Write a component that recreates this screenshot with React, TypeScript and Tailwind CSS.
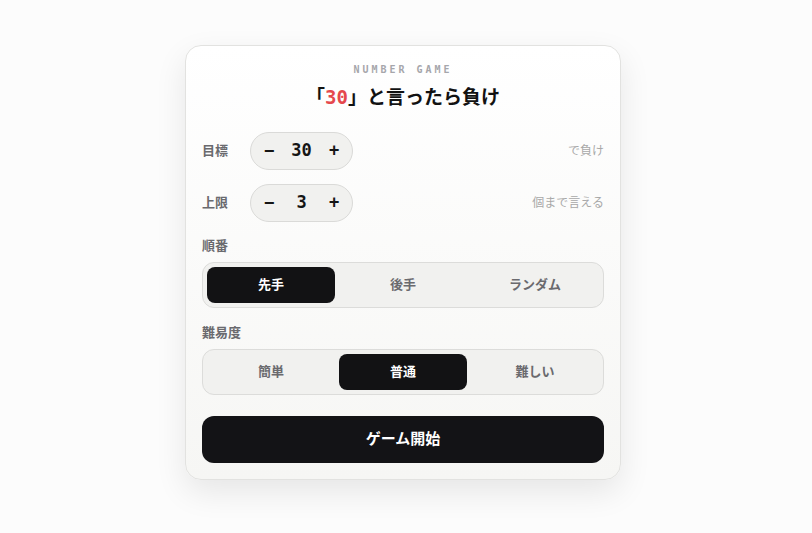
import { useState } from "react";

const FONT = "font-['DejaVu_Sans_Mono','Noto_Sans_CJK_JP',monospace]";

function Stepper({ value, onChange }: { value: number; onChange: (v: number) => void }) {
  return (
    <div className="flex h-[38px] w-[103px] items-center rounded-full border border-[#dadad8] bg-[#f1f1ef] px-[4px]">
      <button
        className="flex h-7 w-7 items-center justify-center text-[17px] font-bold text-[#151515]"
        onClick={() => onChange(value - 1)}
      >
        −
      </button>
      <div className="flex-1 text-center text-[17px] font-bold text-[#151515]">{value}</div>
      <button
        className="flex h-7 w-7 items-center justify-center text-[17px] font-bold text-[#151515]"
        onClick={() => onChange(value + 1)}
      >
        +
      </button>
    </div>
  );
}

function Segmented({
  options,
  active,
  onSelect,
}: {
  options: string[];
  active: number;
  onSelect: (i: number) => void;
}) {
  return (
    <div className="grid grid-cols-3 gap-1 rounded-xl border border-[#dcdcda] bg-[#f1f1ef] p-1">
      {options.map((o, i) => (
        <button
          key={o}
          onClick={() => onSelect(i)}
          className={
            i === active
              ? "h-9 rounded-lg bg-[#121214] text-[13px] font-bold text-white"
              : "h-9 rounded-lg text-[13px] font-bold text-[#6a6a6e]"
          }
        >
          {o}
        </button>
      ))}
    </div>
  );
}

export default function App() {
  const [target, setTarget] = useState(30);
  const [limit, setLimit] = useState(3);
  const [order, setOrder] = useState(0);
  const [level, setLevel] = useState(1);

  return (
    <div className={`flex min-h-screen items-start justify-center bg-[#fcfcfc] pt-[45px] pr-[6px] ${FONT}`}>
      <div className="w-[436px] rounded-2xl border border-[#e2e2e0] bg-gradient-to-b from-white to-[#f6f6f4] px-4 pt-[17px] pb-4 shadow-[0_12px_32px_rgba(0,0,0,0.09)]">
        {/* Header */}
        <div className="text-center text-[10px] font-bold leading-[14px] tracking-[0.3em] text-[#a6a6ab]">
          NUMBER GAME
        </div>
        <h1 className="mt-[6px] text-center text-[19px] font-bold leading-[28px] text-[#121212]">
          「<span className="text-[#e5484d]">{target}</span>」と言ったら負け
        </h1>

        {/* Steppers */}
        <div className="mt-[21px] flex items-center">
          <div className="w-12 text-[13px] font-bold text-[#6a6a6e]">目標</div>
          <Stepper value={target} onChange={setTarget} />
          <div className="ml-auto text-[12px] text-[#a8a8a8]">で負け</div>
        </div>
        <div className="mt-[14px] flex items-center">
          <div className="w-12 text-[13px] font-bold text-[#6a6a6e]">上限</div>
          <Stepper value={limit} onChange={setLimit} />
          <div className="ml-auto text-[12px] text-[#a8a8a8]">個まで言える</div>
        </div>

        {/* Order */}
        <div className="mt-[15px] text-[13px] font-bold leading-[18px] text-[#6a6a6e]">順番</div>
        <div className="mt-[7px]">
          <Segmented options={["先手", "後手", "ランダム"]} active={order} onSelect={setOrder} />
        </div>

        {/* Difficulty */}
        <div className="mt-4 text-[13px] font-bold leading-[18px] text-[#6a6a6e]">難易度</div>
        <div className="mt-[7px]">
          <Segmented options={["簡単", "普通", "難しい"]} active={level} onSelect={setLevel} />
        </div>

        <button className="mt-[21px] h-[47px] w-full rounded-xl bg-[#131316] text-[15px] font-bold text-white">
          ゲーム開始
        </button>
      </div>
    </div>
  );
}
